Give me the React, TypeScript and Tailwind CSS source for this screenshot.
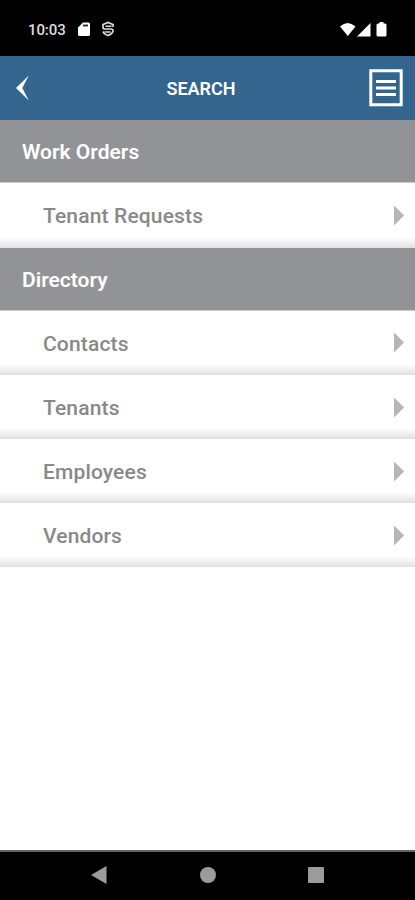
const workOrders = ['Tenant Requests'];
const directory = ['Contacts', 'Tenants', 'Employees', 'Vendors'];

function StatusBar() {
  return (
    <div className="flex h-14 shrink-0 items-start bg-black pl-7 pr-7 text-white">
      <span className="mt-[22px] w-[50px] text-[15px] leading-4 font-medium tracking-[-0.1px] text-[#dedede]">10:03</span>
      <svg className="mt-[22px]" width="13" height="15" viewBox="0 0 13 15">
        <path d="M5 .5h5.500a1.500 1.500 0 0 1 1.500 1.500v10.500a1.500 1.500 0 0 1-1.500 1.500h-9A1.500 1.500 0 0 1 0 12.500V5.500z" fill="#fff" />
        <path d="M5 3.500h5" stroke="#222" strokeWidth="1.800" />
      </svg>
      <svg className="mt-[21px] ml-[11px]" width="12" height="16" viewBox="0 0 12 16" fill="none" stroke="#ddd" strokeWidth="1.700">
        <path d="M11 6V3.500L6 1.500 1 3.500v2.800Q1 8 3 8h6q2 0 2 1.700Q11 12.500 6 14.500 1.500 12.800 1 10.300" />
        <path d="M3.500 5.200h6M2.500 11h6" strokeWidth="1.400" />
      </svg>
      <svg className="mt-[22px] ml-auto" width="47" height="16" viewBox="0 0 47 16" fill="#fff">
        <path d="M0 4.500Q7.500-2.500 15.500 4.500L7.800 14z" />
        <path d="M17 14.500 30.500 1v13.500z" />
        <path d="M39.500 0h4v1.500H45q1.500 0 1.500 1.500v10q0 1.500-1.500 1.500h-7q-1.500 0-1.500-1.500V3q0-1.500 1.500-1.500h1.500z" />
      </svg>
    </div>
  );
}

function Header() {
  return (
    <header className="flex h-16 shrink-0 items-center justify-between bg-[#34658f] pr-3 pl-4 text-white">
      <button className="w-[17px]" aria-label="Back">
        <svg width="14" height="26" viewBox="0 0 14 26" fill="#fff">
          <path d="M12.800.5 0 13l12.800 12.500L6.300 13z" />
        </svg>
      </button>
      <h1 className="text-[18px] font-semibold">SEARCH</h1>
      <button aria-label="Menu">
        <svg width="34" height="38" viewBox="0 0 34 38" fill="none" stroke="#fff">
          <path d="M1.800 1.800h30.400v33.900H1.800z" strokeWidth="3" />
          <path d="M7 12.500h20M7 19h20M7 25.500h20" strokeWidth="3.200" />
        </svg>
      </button>
    </header>
  );
}

function SectionTitle({ title }: { title: string }) {
  return (
    <h2 className="flex h-[62px] items-center bg-[#929396] pt-1 pl-[22px] text-[21px] font-semibold text-white">
      {title}
    </h2>
  );
}

function Row({ label }: { label: string }) {
  return (
    <li className="flex h-16 items-center justify-between bg-linear-to-b from-white from-83% to-[#e1e1e1] pr-[11px] pl-[43px] text-[#898989] first:h-[65.500px] first:border-t first:border-[#c9c9ca]">
      <span className="pt-[3px] text-[21px] font-medium tracking-[0.15px]">{label}</span>
      <svg width="10" height="21" viewBox="0 0 10 21" fill="#b5b6b6">
        <path d="M0 .5v20l10-10z" />
      </svg>
    </li>
  );
}

function NavBar() {
  return (
    <nav className="flex h-[50px] shrink-0 items-center justify-between border-t-2 border-[#666] bg-black pr-[91px] pb-[3px] pl-[91px]">
      <svg width="16" height="18" viewBox="0 0 16 18" fill="#9c9c9c">
        <path d="M15.500 0v18L0 9z" />
      </svg>
      <div className="size-4 rounded-full bg-[#9c9c9c]" />
      <div className="size-4 rounded-[1px] bg-[#9c9c9c]" />
    </nav>
  );
}

export default function App() {
  return (
    <div className="flex h-screen w-full flex-col overflow-hidden bg-white font-['Roboto',sans-serif]">
      <StatusBar />
      <Header />
      <main className="flex-1">
        <SectionTitle title="Work Orders" />
        <ul>
          {workOrders.map((item) => (
            <Row key={item} label={item} />
          ))}
        </ul>
        <SectionTitle title="Directory" />
        <ul>
          {directory.map((item) => (
            <Row key={item} label={item} />
          ))}
        </ul>
      </main>
      <NavBar />
    </div>
  );
}
